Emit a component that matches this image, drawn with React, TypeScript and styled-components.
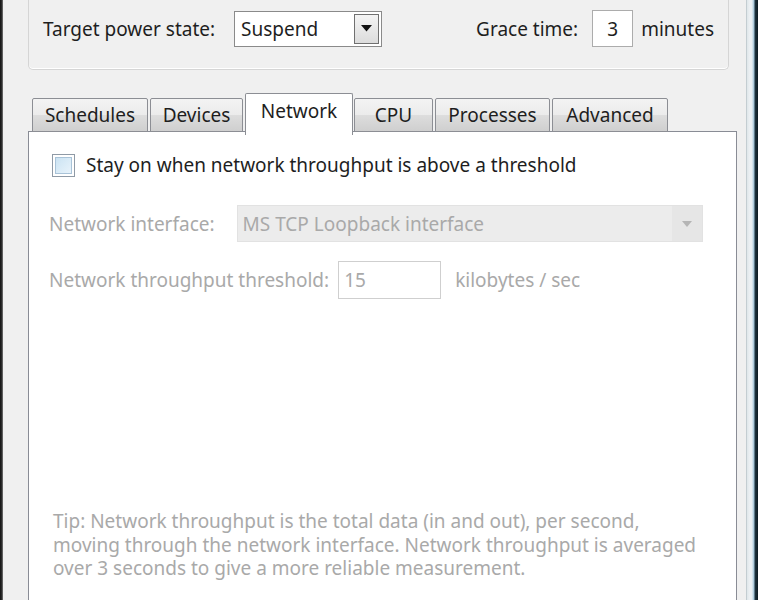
import React from "react";
import styled, { createGlobalStyle } from "styled-components";

const GlobalStyle = createGlobalStyle`
  html, body { margin: 0; padding: 0; background: #f0f0f0; overflow: hidden; }
  * { box-sizing: border-box; }
`;

const FONT = `"Noto Sans", "Open Sans", "DejaVu Sans", sans-serif`;

const Window = styled.div`
  width: 758px;
  height: 600px;
  display: flex;
  overflow: hidden;
  font-family: ${FONT};
  font-size: 19px;
  color: #1e1e1e;
`;

const LeftFrame = styled.div`
  width: 3px;
  flex-shrink: 0;
  background: linear-gradient(to right, #111 0, #333 2px, #8a8a8a 3px);
`;

const RightFrame = styled.div`
  width: 12px;
  flex-shrink: 0;
  background: linear-gradient(to right, #a9b3b9 0, #dfe7ea 1px, #eef1f4 4px, #e6eef3 6px, #9fc2d6 8px, #20343f 9px, #0b1a22 12px);
`;

const Body = styled.div`
  flex: 1;
  display: flex;
  flex-direction: column;
  padding-left: 25px;
  padding-right: 6px;
  background: #f0f0f0;
  & > * { flex-shrink: 0; }
`;

const GroupBox = styled.div`
  width: 701px;
  height: 70px;
  border: 1px solid #d5d5d5;
  border-top: none;
  border-radius: 0 0 5px 5px;
  display: flex;
  align-items: center;
  padding: 0 14px 12px 14px;
  box-shadow: inset 0 -1px 0 #fff;
`;

const Label = styled.span<{ $disabled?: boolean }>`
  color: ${(p) => (p.$disabled ? "#a9a9a9" : "#1e1e1e")};
  white-space: nowrap;
`;

const Select = styled.div`
  margin-left: 19px;
  width: 148px;
  height: 36px;
  border: 1px solid #8a8a8a;
  background: #fff;
  display: flex;
  align-items: center;
  justify-content: space-between;
  padding: 0 2px 0 6px;
`;

const DropButton = styled.div`
  width: 25px;
  height: 30px;
  border: 1px solid #707070;
  background: linear-gradient(#f4f4f4, #dcdcdc);
  display: flex;
  align-items: center;
  justify-content: center;
`;

const Spacer = styled.div`
  flex: 1;
`;

const SmallInput = styled.div`
  margin: 0 8px 0 14px;
  width: 41px;
  height: 37px;
  border: 1px solid #acacac;
  background: #fff;
  display: flex;
  align-items: center;
  justify-content: center;
`;

const TabStrip = styled.div`
  display: flex;
  align-items: flex-end;
  height: 62px;
  padding-left: 4px;
  width: 709px;
  position: relative;
  z-index: 1;
  margin-bottom: -1px;
`;

const Tab = styled.div<{ $active?: boolean; $w: number }>`
  flex-shrink: 0;
  width: ${(p) => p.$w}px;
  height: ${(p) => (p.$active ? 42 : 34)}px;
  margin-right: ${(p) => (p.$active ? 1 : 2)}px;
  margin-bottom: ${(p) => (p.$active ? -3 : 0)}px;
  border: 1px solid #8c8e94;
  border-bottom: ${(p) => (p.$active ? "none" : "1px solid #8c8e94")};
  border-radius: 2px 2px 0 0;
  background: ${(p) =>
    p.$active ? "#ffffff" : "linear-gradient(#f3f3f3 0%, #ebebeb 50%, #dddddd 51%, #cfcfcf 100%)"};
  display: flex;
  align-items: ${(p) => (p.$active ? "flex-start" : "center")};
  padding-top: ${(p) => (p.$active ? 4 : 0)}px;
  justify-content: center;
  color: #1e1e1e;
  white-space: nowrap;
`;

const Panel = styled.div`
  width: 709px;
  height: 520px;
  border: 1px solid #898c95;
  background: #fff;
  display: flex;
  flex-direction: column;
  padding: 20px 0 0 23px;
  & > * { flex-shrink: 0; }
`;

const CheckRow = styled.div`
  display: flex;
  align-items: center;
  gap: 11px;
`;

const CheckBox = styled.div`
  width: 23px;
  height: 23px;
  border: 1px solid #8f9aa6;
  padding: 2px;
  background: #fff;
  & > div {
    width: 100%;
    height: 100%;
    border: 1px solid #a9c3d8;
    background: linear-gradient(135deg, #cbe3f3, #e8f3fb);
  }
`;

const FieldRow = styled.div<{ $top: number }>`
  display: flex;
  align-items: center;
  margin-top: ${(p) => p.$top}px;
  margin-left: -3px;
`;

const Combo = styled.div`
  margin-left: 22px;
  width: 466px;
  height: 37px;
  background: #ececec;
  border: 1px solid #e2e2e2;
  display: flex;
  align-items: center;
  justify-content: space-between;
  padding-left: 5px;
  color: #a9a9a9;
`;

const ComboArrow = styled.div`
  width: 30px;
  height: 100%;
  background: #e6e6e6;
  display: flex;
  align-items: center;
  justify-content: center;
`;

const NumInput = styled.div`
  margin: 0 14px 0 9px;
  width: 103px;
  height: 38px;
  border: 1px solid #cfcfcf;
  background: #fff;
  display: flex;
  align-items: center;
  padding-left: 5px;
  color: #a9a9a9;
`;

const Tip = styled.p`
  margin: 211px 0 0 1px;
  color: #a9a9a9;
  line-height: 23.5px;
  white-space: nowrap;
`;

const Triangle = ({ color, size }: { color: string; size: number }) => (
  <svg width={size} height={size * 0.6} viewBox="0 0 10 6">
    <path d="M0 0 L10 0 L5 6 Z" fill={color} />
  </svg>
);

const tabs = [
  { name: "Schedules", w: 116 },
  { name: "Devices", w: 93 },
  { name: "Network", w: 108, active: true },
  { name: "CPU", w: 79 },
  { name: "Processes", w: 115 },
  { name: "Advanced", w: 116 },
];

export default function App() {
  return (
    <>
      <GlobalStyle />
      <Window>
        <LeftFrame />
        <Body>
          <GroupBox>
            <Label>Target power state:</Label>
            <Select>
              <span>Suspend</span>
              <DropButton>
                <Triangle color="#111" size={11} />
              </DropButton>
            </Select>
            <Spacer />
            <Label>Grace time:</Label>
            <SmallInput>3</SmallInput>
            <Label>minutes</Label>
          </GroupBox>
          <TabStrip>
            {tabs.map((t) => (
              <Tab key={t.name} $w={t.w} $active={t.active}>
                {t.name}
              </Tab>
            ))}
          </TabStrip>
          <Panel>
            <CheckRow>
              <CheckBox>
                <div />
              </CheckBox>
              <Label>Stay on when network throughput is above a threshold</Label>
            </CheckRow>
            <FieldRow $top={27}>
              <Label $disabled>Network interface:</Label>
              <Combo>
                <span>MS TCP Loopback interface</span>
                <ComboArrow>
                  <Triangle color="#b5b5b5" size={10} />
                </ComboArrow>
              </Combo>
            </FieldRow>
            <FieldRow $top={19}>
              <Label $disabled>Network throughput threshold:</Label>
              <NumInput>15</NumInput>
              <Label $disabled>kilobytes / sec</Label>
            </FieldRow>
            <Tip>
              Tip: Network throughput is the total data (in and out), per second,
              <br />
              moving through the network interface. Network throughput is averaged
              <br />
              over 3 seconds to give a more reliable measurement.
            </Tip>
          </Panel>
        </Body>
        <RightFrame />
      </Window>
    </>
  );
}
